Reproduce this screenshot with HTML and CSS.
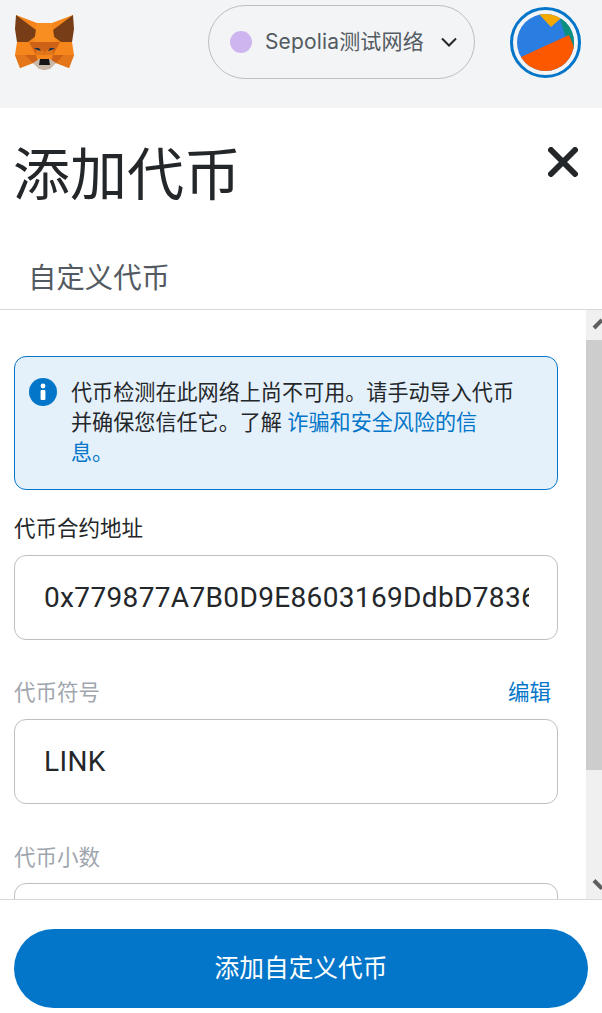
FILE: index.html
```html
<!DOCTYPE html>
<html lang="zh-CN">
<head>
<meta charset="utf-8">
<title>添加代币</title>
<link rel="stylesheet" href="styles.css">
</head>
<body>
<header class="topbar">
  <svg class="fox" viewBox="0 0 60 56" width="60" height="56" aria-hidden="true">
    <polygon points="1,0 22,8 37,8 58,0 57,27 59,40 54,53 41,48 30,55 28,55 18,48 5,53 0,40 2,27" fill="#f6851b"/>
    <polygon points="1,0 25,18 13,27 2,27 0,14" fill="#763d16"/>
    <polygon points="58,0 34,18 46,27 57,27 59,14" fill="#763d16"/>
    <polygon points="22,8 37,8 40,27 29.5,30 19,27" fill="#f88d22"/>
    <polygon points="14,27 45,27 38,40 21,40" fill="#cd6116"/>
    <polygon points="21,33 29,36 29.5,40 21,40" fill="#e2761b"/>
    <polygon points="38,33 30,36 29.5,40 38,40" fill="#e2761b"/>
    <polygon points="5,53 0,40 10,40 18,48" fill="#e4761b"/>
    <polygon points="54,53 59,40 49,40 41,48" fill="#e4761b"/>
    <polygon points="10,40 21,40 23,47 18,48" fill="#cd6116"/>
    <polygon points="49,40 38,40 36,47 41,48" fill="#cd6116"/>
    <polygon points="18,48 24,44 35,44 41,48 35,54 29.5,55 24,54" fill="#c9b8a8"/>
    <polygon points="25,44 34,44 35,50 24,50" fill="#161616"/>
    <polygon points="19,33 24,33 26,36 22,35" fill="#233447"/>
    <polygon points="40,33 35,33 33,36 37,35" fill="#233447"/>
  </svg>
  <div class="network">
    <span class="network-dot"></span>
    <span class="network-name">Sepolia测试网络</span>
    <svg class="chevron" viewBox="0 0 16 10" width="16" height="10" aria-hidden="true"><path d="M1 1.5l7 7 7-7" fill="none" stroke="#24272a" stroke-width="2"/></svg>
  </div>
  <div class="avatar">
    <svg class="avatar-art" viewBox="0 0 57 57" width="57" height="57" aria-hidden="true">
      <rect width="57" height="57" fill="#2a7de1"/>
      <polygon points="21,-1 34,13 43,5 44,-1" fill="#f5a800"/>
      <polygon points="43,5 48,21 57,36 60,36 60,3" fill="#0b8f7e"/>
      <polygon points="4,43 52,21 60,40 60,60 0,60" fill="#fb5800"/>
    </svg>
  </div>
</header>

<main class="page">
  <div class="title-row">
    <h1 class="title">添加代币</h1>
    <svg class="close" viewBox="0 0 30 30" width="30" height="30" aria-hidden="true"><path d="M3 3L27 27M27 3L3 27" stroke="#24272a" stroke-width="6" stroke-linecap="round"/></svg>
  </div>
  <div class="tabs"><span class="tab">自定义代币</span></div>

  <section class="scroll">
    <div class="scroll-content">
      <div class="notice">
        <svg class="notice-icon" viewBox="0 0 28 28" width="28" height="28" aria-hidden="true">
          <circle cx="14" cy="14" r="14" fill="#0376c9"/>
          <circle cx="14" cy="8" r="2.4" fill="#fff"/>
          <rect x="11.6" y="12" width="4.8" height="10" rx="1" fill="#fff"/>
        </svg>
        <p class="notice-text">代币检测在此网络上尚不可用。请手动导入代币并确保您信任它。了解 <a class="link">诈骗和安全风险的信<br>息。</a></p>
      </div>

      <div class="field">
        <div class="label-row"><span class="label">代币合约地址</span></div>
        <div class="input"><span class="input-text">0x779877A7B0D9E8603169DdbD7836e478b4624789</span></div>
      </div>
      <div class="field field-muted">
        <div class="label-row"><span class="label label-muted">代币符号</span><a class="edit">编辑</a></div>
        <div class="input"><span class="input-text">LINK</span></div>
      </div>
      <div class="field field-last">
        <div class="label-row"><span class="label label-muted">代币小数</span></div>
        <div class="input"><span class="input-text">18</span></div>
      </div>
    </div>
    <div class="scrollbar" aria-hidden="true">
      <svg class="arrow" viewBox="0 0 16 30" width="16" height="30"><path d="M8 18L16 10" fill="none" stroke="#5f5f5f" stroke-width="4"/></svg>
      <div class="thumb"></div>
      <svg class="arrow arrow-down" viewBox="0 0 16 30" width="16" height="30"><path d="M8 11.5L16 19.5" fill="none" stroke="#5f5f5f" stroke-width="4"/></svg>
    </div>
  </section>

  <footer class="footer">
    <button class="primary" type="button">添加自定义代币</button>
  </footer>
</main>
</body>
</html>
```

FILE: styles.css
```css
* { box-sizing: border-box; }
html, body { margin: 0; padding: 0; }
body {
  width: 602px;
  height: 1013px;
  overflow: hidden;
  display: flex;
  flex-direction: column;
  background: #fff;
  color: #24272a;
  font-family: Lato, "Noto Sans CJK SC", sans-serif;
}
.topbar {
  flex: none;
  height: 108px;
  background: #f2f4f6;
  display: flex;
  align-items: flex-start;
  padding: 5px 21px 0 15px;
}
.fox { margin-top: 10px; flex: none; }
.network {
  margin-left: 133px;
  width: 267px;
  height: 74px;
  flex: none;
  border: 1px solid #bbc0c5;
  border-radius: 37px;
  display: flex;
  align-items: center;
  padding-left: 21px;
}
.network-dot { width: 22px; height: 22px; border-radius: 50%; background: #cfb5f0; flex: none; }
.network-name {
  margin-left: 13px;
  width: 159px;
  flex: none;
  font-family: Inter, "Noto Sans CJK SC", sans-serif;
  font-size: 21px;
  line-height: 28px;
  letter-spacing: 0.15px;
  color: #535a61;
  white-space: nowrap;
}
.chevron { margin-left: 17px; flex: none; }
.avatar {
  margin: 2px 0 0 35px;
  width: 71px;
  height: 71px;
  flex: none;
  border: 3px solid #0376c9;
  border-radius: 50%;
  display: flex;
  align-items: center;
  justify-content: center;
}
.avatar-art { display: block; border-radius: 50%; }
.page { flex: 1; min-height: 0; display: flex; flex-direction: column; }
.title-row {
  flex: none;
  height: 132px;
  display: flex;
  justify-content: space-between;
  align-items: flex-start;
  padding: 33px 24px 0 13px;
}
.title { margin: 0; font-size: 57px; line-height: 64px; font-weight: 400; }
.close { margin-top: 6px; }
.tabs {
  flex: none;
  height: 70px;
  border-bottom: 1px solid #d6d9dc;
  padding: 18px 0 0 28px;
}
.tab { font-size: 28.4px; line-height: 38px; color: #535a61; display: block; }
.scroll { flex: 1; min-height: 0; position: relative; overflow: hidden; }
.scroll-content { padding: 46px 44px 0 14px; }
.notice {
  height: 134px;
  border: 1px solid #0376c9;
  border-radius: 12px;
  background: #e5f1fa;
  display: flex;
  padding: 21px 38px 0 14px;
}
.notice-icon { flex: none; }
.notice-text { margin: -1px 0 0 14px; font-size: 21.1px; line-height: 30px; color: #24272a; }
.link { color: #0376c9; }
.field { display: flex; flex-direction: column; }
.label-row {
  height: 65px;
  display: flex;
  justify-content: space-between;
  align-items: flex-end;
  padding: 0 7px 13px 0;
  line-height: 28px;
}
.field-muted .label-row { height: 79px; }
.field-last .label-row { height: 79px; padding-bottom: 12px; }
.label { font-size: 21.5px; line-height: 28px; }
.label-muted { color: #9fa6ae; }
.edit { font-size: 21.5px; line-height: 28px; color: #0376c9; }
.input {
  height: 85px;
  border: 1px solid #bbc0c5;
  border-radius: 12px;
  display: flex;
  align-items: center;
  padding: 0 28px 0 29px;
  overflow: hidden;
}
.input-text { font-family: Roboto, sans-serif; font-size: 28px; line-height: 36px; white-space: nowrap; overflow: hidden; letter-spacing: 0.35px; }
.scrollbar {
  position: absolute;
  top: 0;
  right: 0;
  bottom: 0;
  width: 16px;
  background: #f0f0f0;
  display: flex;
  flex-direction: column;
}
.arrow { display: block; flex: none; }
.thumb { height: 430px; background: #cdcdcd; flex: none; }
.arrow-down { margin-top: auto; }
.footer {
  flex: none;
  height: 114px;
  border-top: 1px solid #d6d9dc;
  padding: 29px 14px 0;
  background: #fff;
}
.primary {
  display: block;
  width: 574px;
  height: 79px;
  border: 0;
  border-radius: 40px;
  background: #0376c9;
  color: #fff;
  font-family: inherit;
  font-size: 24.7px;
  padding: 0 0 6px;
}
```
